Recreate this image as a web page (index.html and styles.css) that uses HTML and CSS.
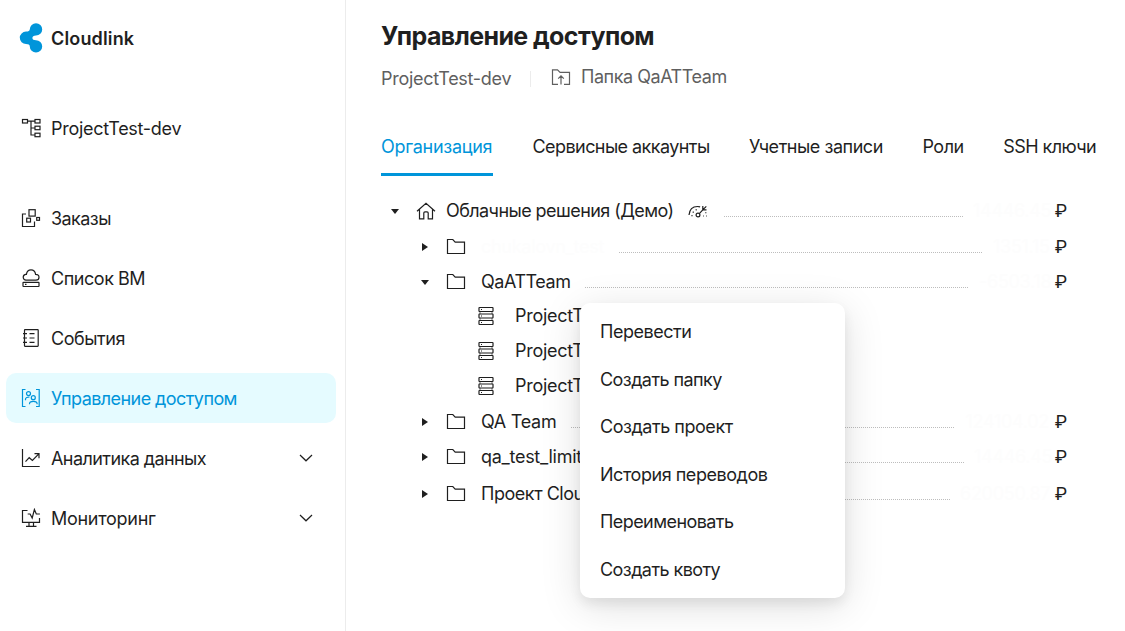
FILE: index.html
```
<!DOCTYPE html>
<html lang="ru">
<head>
  <meta charset="UTF-8" />
  <meta name="viewport" content="width=device-width, initial-scale=1.0"/>
  <title>Cloudlink - Управление доступом</title>
  <link rel="stylesheet" href="styles.css">
</head>
<body>
  <!-- shared icons -->
  <svg class="sprite" width="0" height="0">
    <symbol id="folder" viewBox="0 0 20 18"><path d="M1.500 15.500V1.500h5.300l2.400 2.600h9.300v11.400z"/></symbol>
    <symbol id="server" viewBox="0 0 18 20"><rect x="2" y="1.500" width="14" height="4" rx=".5"/><rect x="2" y="8" width="14" height="4" rx=".5"/><rect x="2" y="14.500" width="14" height="4" rx=".5"/><path d="M4 3.500h1M4 10h1M4 16.500h1"/><path stroke-opacity=".5" d="M3 5.500V8M15 5.500V8M3 12v2.500M15 12v2.500"/></symbol>
    <symbol id="chevron" viewBox="0 0 14 8"><path d="M1 1l6 5.800L13 1"/></symbol>
  </svg>

  <aside class="sidebar">
    <div class="logo">
      <svg width="24" height="32" viewBox="0 0 24 32"><path d="M17 1.200a6.200 6.200 0 0 1 0 12.400c-2.400 0-3.600 1-3.600 2.300s1.200 2.300 3.600 2.300a6.200 6.200 0 1 1-6.200 6.200c0-1.700-1.400-2.400-3.800-2.400a6.200 6.200 0 0 1 0-12.400c2.400 0 3.800-.7 3.800-2.400A6.200 6.200 0 0 1 17 1.200z"/></svg>
      <span class="brand">Cloudlink</span>
    </div>

    <a class="item project">
      <svg class="icon" viewBox="0 0 20 20"><rect x="1.500" y="1.500" width="5" height="3.500"/><rect x="14" y="1.500" width="5" height="3.500"/><rect x="14" y="8.200" width="5" height="3.500"/><rect x="14" y="15.200" width="5" height="3.500"/><path d="M6.500 3.200H14M10 3.200V17h4M10 10h4"/></svg>
      <span class="name">ProjectTest-dev</span>
    </a>

    <nav class="menu">
      <a class="item">
        <svg class="icon" viewBox="0 0 20 20"><path d="M5 6H1.500v12.500h12V13.500"/><rect x="8" y="1.700" width="6.200" height="6.400"/><rect x="5.700" y="10.200" width="3.800" height="3.800"/><rect x="15.700" y="9.500" width="2.800" height="2.800"/></svg>
        <span class="name tight">Заказы</span>
      </a>
      <a class="item">
        <svg class="icon" viewBox="0 0 20 20"><path d="M5 12.200a3 3 0 0 1-.5-5.900h.9C5.800 3.600 7.500 1.800 10 1.800s4.200 1.800 4.600 4.500c2 0 3.400 1.200 3.400 3s-1.300 2.900-3 2.900z"/><rect x="2" y="14.300" width="16" height="4.200" rx=".5"/><path d="M4 16.400h1.500"/></svg>
        <span class="name snug">Список ВМ</span>
      </a>
      <a class="item">
        <svg class="icon" viewBox="0 0 20 20"><rect x="3.500" y="1.700" width="13.700" height="16.600" rx=".5"/><path d="M2 5.700h4M2 10h4M2 14.300h4M8.500 5.700h5M8.500 10h5M8.500 14.300h5"/></svg>
        <span class="name snug">События</span>
      </a>
      <a class="item active">
        <svg class="icon" viewBox="0 0 20 20"><path d="M4.500 1.500h-3v17h3M15 1.500h3.200v17H15"/><circle cx="7.500" cy="5.600" r="2"/><path d="M4.500 12.300v-1c0-1.700 1.200-2.300 4-2.300M8.500 16.200v-.4c0-1.600 1.400-2.500 3.800-2.500s3.800.9 3.800 2.500v.4"/><circle cx="12.300" cy="9.700" r="2"/></svg>
        <span class="name tight">Управление доступом</span>
      </a>
      <a class="item">
        <svg class="icon" viewBox="0 0 20 20"><path d="M1.500 1v17.500h17.200M4.500 13.700l3.700-4 3.200 2.800 6.400-6.600M13.500 5.700h4.500v4.500"/></svg>
        <span class="name tight">Аналитика данных</span>
        <svg class="arrow"><use href="#chevron"/></svg>
      </a>
      <a class="item">
        <svg class="icon" viewBox="0 0 20 20"><path d="M6.500 2.500h-5v11.800h17V10M6.700 6h2.400l2.100 4 2.200-8.500L15.300 6h3.600M8 14.300v4M12.500 14.300v4M5 18.300h10.500"/></svg>
        <span class="name">Мониторинг</span>
        <svg class="arrow"><use href="#chevron"/></svg>
      </a>
    </nav>
  </aside>

  <main class="content">
    <h1>Управление доступом</h1>
    <div class="crumbs">
      <span class="crumb">ProjectTest-dev</span>
      <span class="divider"></span>
      <svg class="up-folder" viewBox="0 0 20 18"><path d="M7 16.300H1.500V1.800h5l2.600 2.600h9.400v11.900H13M10 16.500V8M7.200 10.700L10 7.900l2.800 2.800"/></svg>
      <span class="snug">Папка QaATTeam</span>
    </div>

    <div class="tabs">
      <a class="tab current">Организация</a>
      <a class="tab tight">Сервисные аккаунты</a>
      <a class="tab snug">Учетные записи</a>
      <a class="tab snug">Роли</a>
      <a class="tab tight">SSH ключи</a>
    </div>

    <div class="tree">
      <div class="row root">
        <i class="caret down"></i>
        <svg class="home" viewBox="0 0 20 18"><path d="M1 9.300L10 1.300l9 8M3.500 7.500v9.300h4.300V11c0-.8.500-1.200 1.200-1.200h2c.7 0 1.200.4 1.200 1.200v5.800h4.300V7.500"/></svg>
        <span class="label tight">Облачные решения (Демо)</span>
        <svg class="gauge" viewBox="0 0 20 14"><path d="M1 11C1.500 5.500 5 2.500 9.500 2.500c1 0 1.800.1 2.600.4"/><path stroke-dasharray="1.200 2.600" d="M4 12.300c0-4 2.500-6.800 6.500-6.800"/><circle cx="10" cy="11" r="1.900"/><path d="M11.300 9.600l3.500-3.800M14.800 2v3.800h3.700M15 5.600l3.300-3.200M17.800 8.200v1M15 12h.8M18 12h.8"/></svg>
        <span class="leader"></span>
        <span class="amount" style="width: 82px">14446.45</span><span class="rub">₽</span>
      </div>
      <div class="row">
        <i class="caret"></i>
        <svg class="folder"><use href="#folder"/></svg>
        <span class="label hidden-name">chukalovn_test</span>
        <span class="leader"></span>
        <span class="amount" style="width: 62px">1351.15</span><span class="rub">₽</span>
      </div>
      <div class="row short">
        <i class="caret down"></i>
        <svg class="folder"><use href="#folder"/></svg>
        <span class="label snug">QaATTeam</span>
        <span class="leader"></span>
        <span class="amount" style="width: 76px">-6503.18</span><span class="rub">₽</span>
      </div>
      <div class="projects">
        <div class="project-row"><svg class="server"><use href="#server"/></svg><span class="label">ProjectTest</span></div>
        <div class="project-row"><svg class="server"><use href="#server"/></svg><span class="label">ProjectTest</span></div>
        <div class="project-row"><svg class="server"><use href="#server"/></svg><span class="label">ProjectTest</span></div>
      </div>
      <div class="row">
        <i class="caret"></i>
        <svg class="folder"><use href="#folder"/></svg>
        <span class="label">QA Team</span>
        <span class="leader"></span>
        <span class="amount" style="width: 90px">124104.02</span><span class="rub">₽</span>
      </div>
      <div class="row short">
        <i class="caret"></i>
        <svg class="folder"><use href="#folder"/></svg>
        <span class="label">qa_test_limit</span>
        <span class="leader"></span>
        <span class="amount" style="width: 81px">14446.45</span><span class="rub">₽</span>
      </div>
      <div class="row last">
        <i class="caret"></i>
        <svg class="folder"><use href="#folder"/></svg>
        <span class="label snug">Проект Cloud</span>
        <span class="leader"></span>
        <span class="amount" style="width: 95px">620050.87</span><span class="rub">₽</span>
      </div>

      <div class="popup">
        <a class="snug">Перевести</a>
        <a class="tight">Создать папку</a>
        <a class="snug">Создать проект</a>
        <a class="snug">История переводов</a>
        <a class="tight">Переименовать</a>
        <a class="tight">Создать квоту</a>
      </div>
    </div>
  </main>
</body>
</html>
```
FILE: styles.css
```
* {
  box-sizing: border-box;
}
body {
  margin: 0;
  height: 631px;
  display: flex;
  overflow: hidden;
  background-color: #fff;
  color: #1f1f1f;
  font-family: Inter, 'Liberation Sans', sans-serif;
  font-size: 18px;
  line-height: 24px;
  letter-spacing: -0.28px;
  white-space: nowrap;
}
svg {
  display: block;
  flex: none;
  fill: none;
  stroke: currentColor;
  stroke-width: 1.2;
}
.sprite {
  display: none;
}
.snug {
  letter-spacing: -0.46px;
}
.tight {
  letter-spacing: -0.57px;
}

/* sidebar */
.sidebar {
  width: 346px;
  flex: none;
  border-right: 1px solid #ececec;
  padding: 22px 9px 0 6px;
}
.logo {
  display: flex;
  align-items: center;
  gap: 8px;
  height: 32px;
  padding-left: 13px;
  font-weight: 600;
}
.logo svg {
  fill: #0095da;
  stroke: none;
}
.brand {
  padding-top: 2px;
  letter-spacing: 0.15px;
}
.project {
  margin-top: 49px;
}
.menu {
  display: flex;
  flex-direction: column;
  gap: 10px;
  margin-top: 40px;
}
.item {
  display: flex;
  align-items: center;
  gap: 10px;
  height: 50px;
  padding: 0 23px 0 15px;
  border-radius: 10px;
}
.item.active {
  background-color: #e5fbff;
  color: #0095da;
}
.name {
  padding-top: 2px;
}
.icon {
  width: 20px;
  height: 20px;
}
.arrow {
  width: 14px;
  height: 8px;
  margin-left: auto;
}

/* header */
.content {
  flex: 1;
  min-width: 0;
  padding: 20px 58px 0 35px;
}
h1 {
  margin: 0;
  font-size: 25px;
  line-height: 33px;
  font-weight: 700;
  letter-spacing: -0.6px;
}
.crumbs {
  display: flex;
  align-items: center;
  height: 24px;
  margin-top: 12px;
  color: #5f5f5f;
}
.crumb {
  width: 130px;
  padding-top: 3px;
}
.divider {
  width: 1px;
  height: 16px;
  margin: 4px 20px 0 19px;
  background-color: #ececec;
}
.up-folder {
  width: 20px;
  height: 18px;
  margin-right: 10px;
}
.tabs {
  display: flex;
  gap: 39.5px;
  height: 41px;
  margin-top: 46px;
}
.tab.current {
  width: 112px;
  flex: none;
  color: #0095da;
  border-bottom: 3px solid #0095da;
}

/* organization tree */
.tree {
  position: relative;
  padding-top: 17px;
}
.row {
  display: flex;
  align-items: center;
  height: 36px;
  padding-left: 40px;
}
.row.root {
  padding-left: 10px;
}
.row.short {
  height: 34px;
}
.row.last {
  height: 40px;
}
.caret {
  width: 10px;
  flex: none;
  margin-right: 15px;
}
.caret::before {
  content: '';
  display: block;
  width: 0;
  margin-left: 1px;
  border: 4.5px solid transparent;
  border-left: 6px solid #1f1f1f;
  border-right: 0;
}
.caret.down::before {
  margin-left: 0;
  border: 4.5px solid transparent;
  border-top: 5px solid #1f1f1f;
  border-bottom: 0;
}
.home {
  width: 20px;
  height: 18px;
  margin-right: 10px;
}
.folder {
  width: 20px;
  height: 18px;
  margin-right: 15px;
}
.gauge {
  width: 20px;
  height: 14px;
  margin-left: 14px;
  margin-right: 1px;
}
.leader {
  flex: 1;
  height: 1px;
  margin: 11px 10px 0 15px;
  background: repeating-linear-gradient(90deg, #bdbdbd 0 1px, transparent 1px 2px);
}
.amount {
  flex: none;
  text-align: right;
  padding-right: 6px;
  color: #fdfdfd;
}
.rub {
  width: 12px;
  font-family: Roboto, sans-serif;
}
.hidden-name {
  width: 123px;
  color: #fdfdfd;
}
.projects {
  margin: -1px 0 1px;
}
.project-row {
  display: flex;
  align-items: center;
  height: 35px;
  padding-left: 96px;
}
.server {
  width: 18px;
  height: 20px;
  margin-right: 20px;
}

/* context menu */
.popup {
  position: absolute;
  left: 199px;
  top: 127px;
  width: 265px;
  height: 295px;
  padding: 5px 20px;
  border-radius: 10px;
  background-color: #fff;
  box-shadow: 0 8px 40px rgba(0, 0, 0, 0.13), 0 6px 12px rgba(0, 0, 0, 0.07);
}
.popup a {
  display: block;
  height: 47.5px;
  line-height: 47.5px;
}
```
